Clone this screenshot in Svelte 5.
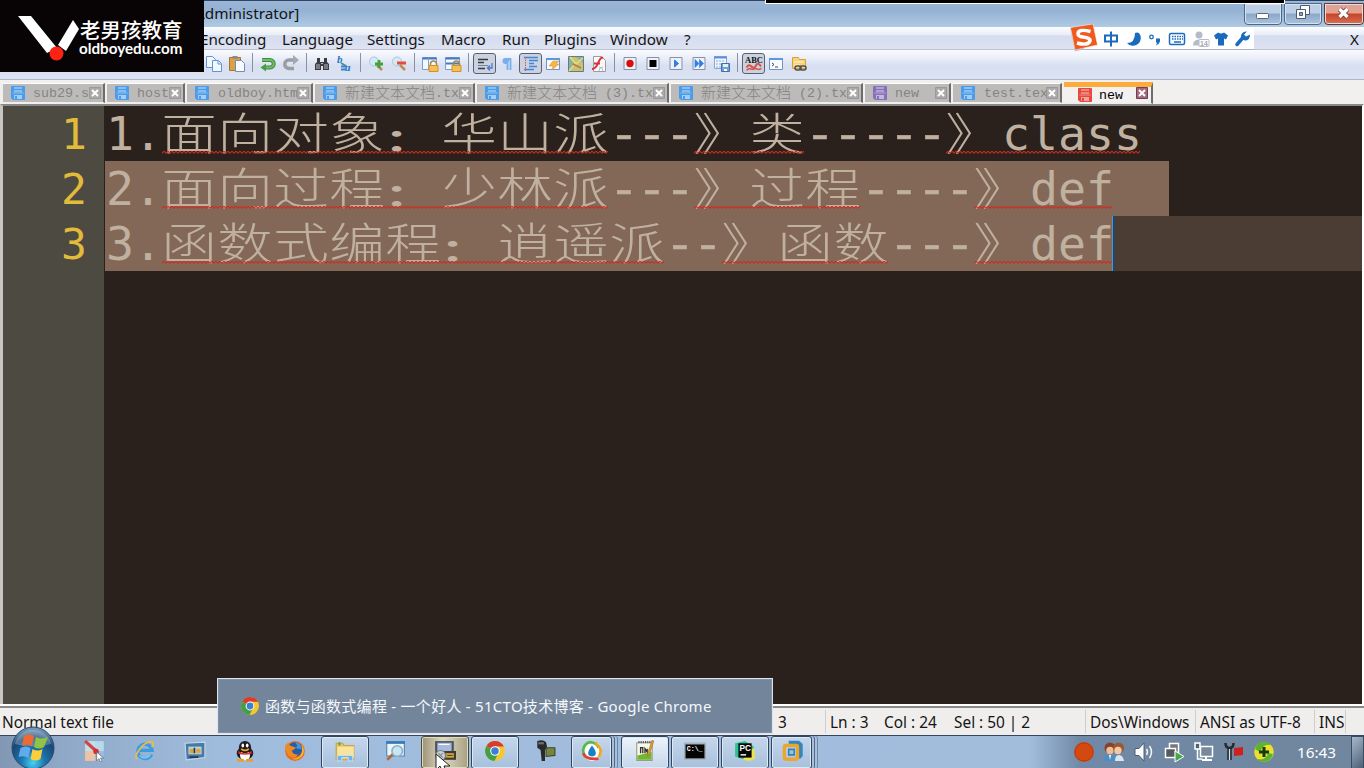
<script>
  const menus = [
    ['Encoding', 200, 68], ['Language', 282, 71], ['Settings', 367, 60], ['Macro', 441, 47],
    ['Run', 502, 28], ['Plugins', 544, 52], ['Window', 610, 60], ['?', 684, 8]
  ].map(([t, x, w], i, a) => ({ t, w, gap: i ? x - a[i - 1][1] - a[i - 1][2] : 0 }));

  const tools = ['copy', 'paste', '|', 'undo', 'redo', '|', 'find', 'replace', '|', 'zin', 'zout', '|', 'syncv', 'synch', '|',
    '*wrap', 'pilcrow', '*indent', 'udl', 'map', 'func', '|', 'rec', 'stop', 'play', 'ff', 'savemacro', '|', '*abc', 'console', 'folder'];

  const tabs = [
    { w: 102, pad: 30, cjk: '', t: 'sub29.s', c: '#4a9bea' },
    { w: 78, pad: 30, cjk: '', t: 'host', c: '#4a9bea' },
    { w: 126, pad: 31, cjk: '', t: 'oldboy.htm', c: '#4a9bea' },
    { w: 160, pad: 30, cjk: '新建文本文档', t: '.tx', c: '#4a9bea' },
    { w: 192, pad: 30, cjk: '新建文本文档', t: ' (3).tx', c: '#4a9bea' },
    { w: 192, pad: 30, cjk: '新建文本文档', t: ' (2).tx', c: '#4a9bea' },
    { w: 86, pad: 30, cjk: '', t: 'new', c: '#8670b8' },
    { w: 109, pad: 31, cjk: '', t: 'test.tex', c: '#4a9bea' },
    { w: 89, pad: 35, cjk: '', t: 'new', c: '#e8493e', on: true }
  ];

  // Each segment: [text, misspelled]; CJK glyphs take two columns.
  const lines = [
    [['1.', 0], ['面向对象：华山派', 1], ['---', 0], ['》类', 1], ['-----', 0], ['》class', 1]],
    [['2.', 0], ['面向过程：少林派', 1], ['---', 0], ['》过程', 1], ['----', 0], ['》def', 1]],
    [['3.', 0], ['函数式编程：逍遥派', 1], ['--', 0], ['》函数', 1], ['---', 0], ['》def', 1]]
  ];
  const kind = (ch) => (ch === '：' ? 'w colon' : ch.charCodeAt(0) > 255 ? 'w' : ch === '-' ? 'n dash' : 'n');

  const tasks = [
    ['paint', 50, ''], ['ie', 50, ''], ['vm', 50, ''], ['qq', 50, ''], ['firefox', 50, ''], ['explorer', 50, 'open'],
    ['search', 50, ''], ['putty', 50, 'hover'], ['chrome', 50, 'open'], ['camera', 50, ''], ['swirl', 50, 'open short'],
    ['npp', 50, 'open lit'], ['cmd', 50, 'open'], ['pycharm', 50, 'open'], ['vmware', 50, 'open short']
  ];
  const tray = ['ball', 'people', 'speaker', 'eject', 'net', 'flag', 'plus'];
</script>

{#snippet disk(c)}
  <svg class="disk" width="14" height="14" viewBox="0 0 14 14"><path d="M.5 .5h13v13H2L.5 12z" fill={c} stroke={c} /><path d="M3 1h8v5H3z" fill="#fff" opacity=".35" /><path d="M3 3.500h8" stroke={c} /><path d="M1.500 7h11" stroke="#fff" opacity=".4" /><path d="M3 9h8v4H3z" fill="#fff" opacity=".5" /><path d="M4 10h2v3H4z" fill={c} /></svg>
{/snippet}

{#snippet chrome()}
  <circle cx="10" cy="10" r="9" fill="#f6c62f" /><path d="M10 10L2.200 5.500A9 9 0 0 1 18 5.800H10z" fill="#d93c2d" /><path d="M10 10L2.200 5.500A9 9 0 0 0 9.500 19L13 12z" fill="#43a047" /><circle cx="10" cy="10" r="4.400" fill="#fff" /><circle cx="10" cy="10" r="3.400" fill="#3e7fd6" />
{/snippet}

{#snippet tool(n)}
  <svg width="18" height="18" viewBox="0 0 18 18" fill="none">
    {#if n === 'copy'}
      <g fill="#f3f8ff" stroke="#5d94da"><path d="M1.500 1.500h6l3 3v8h-9z" /><path d="M7.500 5.500h6l3 3v8h-9z" /><path d="M13 6v3h3" /></g>
    {:else if n === 'paste'}
      <path d="M1.500 2.500h11v13h-11z" fill="#dda043" stroke="#a8742c" /><path d="M4.500 1h5v3h-5z" fill="#8c8c90" /><path d="M7.500 5.500h6l3 3v8h-9z" fill="#f7faff" stroke="#6f8fb8" />
    {:else if n === 'undo'}
      <path d="M3 5h8a3.700 3.700 0 0 1 0 7.500H6" stroke="#3f8b3f" stroke-width="4" /><path d="M3 5h8a3.700 3.700 0 0 1 0 7.500H6" stroke="#70bc68" stroke-width="2" /><path d="M7 8.500v8L1.500 12.500z" fill="#4a9b47" />
    {:else if n === 'redo'}
      <path d="M12 5H7a3.700 3.700 0 0 0 0 8.500h5" stroke="#9a9da4" stroke-width="3.500" /><path d="M11 0v10l6-5z" fill="#a5a8ae" />
    {:else if n === 'find'}
      <path d="M4 3h3v4h4V3h3v4l2 2v6h-6v-4H8v4H2V9l2-2z" fill="#3a3c42" /><path d="M4 9v5M6 9v5M12 9v5M14 9v5M8 8.500h2" stroke="#b8bcc6" />
    {:else if n === 'replace'}
      <text x="1" y="8" class="ab">b</text><text x="9" y="16" class="ab">a</text><path d="M5 8l5 3" stroke="#47967c" stroke-width="2" /><path d="M5 11.500h6M5 14.500h5" stroke="#3e7fd0" stroke-width="2" />
    {:else if n === 'zin' || n === 'zout'}
      <circle cx="7" cy="6.500" r="4.500" fill="#d2e9f6" stroke="#aac8dc" /><path d="M10 10l5 5" stroke="#c08a54" stroke-width="2.500" />
      {#if n === 'zin'}<path d="M12 5v8M8 9h8" stroke="#43a03b" stroke-width="2.800" />{:else}<path d="M7 8h9" stroke="#e64a3f" stroke-width="3" />{/if}
    {:else if n === 'syncv' || n === 'synch'}
      <path d="M1.500 2.500h14v12h-14z" fill="#f3f9ff" stroke="#79a0d4" /><path d="M1.500 3.500h14" stroke="#4779bb" stroke-width="2" />
      {#if n === 'syncv'}<path d="M7.500 3v11" stroke="#79a0d4" />{:else}<path d="M2 8.500h13" stroke="#4779bb" stroke-width="2" />{/if}
      <path d="M9.500 11V9a3 3 0 0 1 6 0v2" stroke="#a38651" stroke-width="1.500" /><path d="M8 10.500h9v6H8z" fill="#f8be4e" stroke="#d3902c" />
    {:else if n === 'wrap'}
      <path d="M2 4.500h10M2 7.500h6M2 13.500h7" stroke="#343a46" stroke-width="1.500" /><path d="M2 10.500h10" stroke="#76809a" /><path d="M16 8v5h-4M14 10.500L11.500 13l2.500 2.500" stroke="#4779d0" stroke-width="1.300" />
    {:else if n === 'pilcrow'}
      <path d="M13 3H7.500a3 3 0 0 0 0 6H9z" fill="#78aeea" /><path d="M9.500 3v12M12.500 3v12" stroke="#78aeea" stroke-width="1.800" />
    {:else if n === 'indent'}
      <path d="M2 2.500h14M7 5.500h9M7 8.500h5M7 11.500h8M2 14.500h10" stroke="#3f86dc" stroke-width="1.500" /><path d="M3.500 2v14" stroke="#df5454" stroke-dasharray="1.500 1" />
    {:else if n === 'udl' || n === 'console'}
      <path d="M2.500 3.500h13v11h-13z" fill="#f7fbff" stroke="#7292c0" /><path d="M2 4h14" stroke="#5d97e0" stroke-width="2" />
      {#if n === 'udl'}<path d="M9 6h6l-3 3h3l-7 6 1-4H5z" fill="#f6b747" stroke="#d98d2d" stroke-width=".5" />{:else}<path d="M5 8l2 1.500L5 11M8 12h3" stroke="#3d4956" />{/if}
    {:else if n === 'map'}
      <path d="M1.500 1.500h15v15h-15z" fill="#c3c474" stroke="#66788a" /><path d="M2 2l6 8-6 6zM9 2h7v6z" fill="#86b3a3" /><path d="M3 2l6 7 7-6M8 9l-6 7" stroke="#f0da7a" stroke-width="1.500" /><path d="M6 9l8 4" stroke="#c07448" stroke-width="1.500" />
    {:else if n === 'func'}
      <path d="M3.500 1.500h8l4 4v11h-12z" fill="#fbf9f9" stroke="#9b9ba0" /><path d="M13 3c-5-2-4 11-11 11M4 8.500h6" stroke="#d6323a" stroke-width="2" /><path d="M9 12q4 0 4 4M13 12q-4 0-4 4" stroke="#b8bcc4" />
    {:else if n === 'savemacro'}
      <path d="M1.500 1.500h12v12h-12z" fill="#eef5ff" stroke="#8aa6d0" /><path d="M1 2.500h13" stroke="#5a92dc" stroke-width="2" /><path d="M3 6h9M3 9h6M3 12h5" stroke="#8aa6d0" stroke-dasharray="2 1" /><path d="M8.500 8.500h8v8h-8z" fill="#6ea0dc" stroke="#466fa9" /><path d="M10 9h5v3h-5z" fill="#ddf5e0" /><path d="M11 14h3v2h-3z" fill="#fff" />
    {:else if n === 'abc'}
      <text x="9" y="7.500" class="abc">ABC</text><path d="M1.500 12.500q2.500-4 5-1t4.500-1 5 1" stroke="#d6534b" stroke-width="2" /><path d="M1.500 15l3-1.500 3 1 3-1 3 1 3-1" stroke="#d6534b" stroke-width="1.500" />
    {:else if n === 'folder'}
      <path d="M2.500 4V2.500h6l1 2h6v9h-13z" fill="#f9d37c" stroke="#d9a041" /><path d="M4 7h9M4 10h6" stroke="#fff4cb" /><rect x="5" y="11" width="6" height="4" rx="2" stroke="#4d5054" stroke-width="1.500" /><rect x="10" y="11" width="6" height="4" rx="2" stroke="#4d5054" stroke-width="1.500" />
    {:else}
      <path d="M3 2.500h12v12H3z" fill="#eef1f8" stroke="#8590a8" />
      {#if n === 'rec'}<circle cx="9" cy="8.500" r="3.700" fill="#d80f0f" />
      {:else if n === 'stop'}<path d="M5.500 5h7v7h-7z" fill="#000" />
      {:else if n === 'play'}<path d="M7.500 5v7l4-3.500z" fill="#2f7fe2" stroke="#2f7fe2" />
      {:else}<path d="M5 4.500v8l4-4zM9.500 4.500v8l4-4z" fill="#2f7fe2" stroke="#2f7fe2" stroke-width=".7" />{/if}
    {/if}
  </svg>
{/snippet}

{#snippet taskicon(n)}
  <svg width="22" height="22" viewBox="0 0 20 20" fill="none">
    {#if n === 'paint'}
      <path d="M1 1h9v9H1z" fill="#bfe3e2" /><path d="M10 1h8v9h-8z" fill="#b7d9ea" /><path d="M1 10h9v9H1z" fill="#edc3a5" /><path d="M10 10h8v9h-8z" fill="#98bce9" /><path d="M1 1l10 9" stroke="#d04552" stroke-width="3" /><circle cx="11" cy="10.500" r="2.500" fill="#d33327" /><path d="M11.500 11v8l2-2 1.500 3 1.500-1-1.500-2.500h3z" fill="#fff" stroke="#555" stroke-width=".6" />
    {:else if n === 'ie'}
      <path d="M16 13a6.500 6.500 0 1 1 .5-3.500H5" stroke="#3b9be3" stroke-width="3" /><path d="M15 13a6 6 0 0 1-10 1" stroke="#8bd0f7" /><path d="M3 17C-2 17 8 1 16 1.500c3 .5 1 4 0 5" stroke="#efbd3d" stroke-width="1.500" />
    {:else if n === 'vm'}
      <path d="M1 3l18-1v14L2 18z" fill="#4479a9" stroke="#c5d9e9" /><path d="M4 6h12v7H4z" fill="#bcd4dd" /><path d="M5 8h4v4H5zM11 8h4v4h-4z" fill="#d9a73f" /><path d="M9.500 7v5M5 15.500h8" stroke="#223a4d" stroke-width="1.500" />
    {:else if n === 'qq'}
      <ellipse cx="10" cy="12" rx="7.500" ry="6" fill="#1d1d21" /><ellipse cx="10" cy="14" rx="4.500" ry="4.500" fill="#fff" /><ellipse cx="10" cy="6.500" rx="5.500" ry="5.500" fill="#1d1d21" /><ellipse cx="8" cy="5" rx="1.200" ry="1.800" fill="#fff" /><ellipse cx="12" cy="5" rx="1.200" ry="1.800" fill="#fff" /><path d="M6.500 8q3.500 3 7 0" stroke="#f5a51e" stroke-width="1.500" /><path d="M4 10q6 4 12 0v2.500q-6 2-12 0z" fill="#df332d" /><path d="M3 18.500h6M11 18.500h6" stroke="#ee9d23" stroke-width="2.500" />
    {:else if n === 'firefox'}
      <circle cx="10" cy="10" r="9" fill="#e66e1a" /><circle cx="10" cy="8.500" r="6.500" fill="#275da5" /><path d="M10 2q6 0 6 7c-2-2-3 0-5-2l1-2z" fill="#4696d6" /><path d="M1 5q2-2 3-3 0 3 4 4l3 1-4 3q2 4 6 3-3 5-9 1Q1 10 1 5z" fill="#ed8a24" /><path d="M16 4q4 6 0 11-4 4-9 2 12 0 9-13z" fill="#f7be3b" />
    {:else if n === 'explorer'}
      <path d="M2 3h6l1 2h9v13H2z" fill="#e9c463" stroke="#caa247" /><path d="M3 6h15v10H3z" fill="#f8e59d" /><path d="M3 19v-5h14v5h-4v-3H7v3z" fill="#6bb4e5" stroke="#d7edfb" stroke-width=".7" /><path d="M5 2v3" stroke="#65a94a" stroke-width="2" />
    {:else if n === 'search'}
      <path d="M2.500 1.500h16v13h-16z" fill="#eaf7fd" stroke="#4c84b8" /><path d="M2 2.500h17" stroke="#3679b6" stroke-width="2" /><path d="M8 13l-5 5" stroke="#ad6a3b" stroke-width="2.500" /><circle cx="12" cy="10" r="4.800" fill="#c7e6f3" stroke="#8fb0c2" stroke-width="1.500" />
    {:else if n === 'putty'}
      <path d="M1 1h17v11H1z" fill="#4d545f" /><path d="M3 2.500h13v8H3z" fill="#a8b9df" /><path d="M4 4h10" stroke="#fff" /><path d="M8 10h12v8H8z" fill="#3d3b35" /><path d="M11 12h7v4h-7z" fill="#e0ad32" /><path d="M12 14h5" stroke="#3d3b35" /><circle cx="6" cy="14" r="4.500" fill="#ccd0d4" stroke="#747c83" /><path d="M4 12l4 4M8 12l-4 4" stroke="#838a91" />
    {:else if n === 'chrome'}{@render chrome()}
    {:else if n === 'camera'}
      <path d="M3 1q5-2 8 1l1 5-2 2v10H7L6 9 3 7z" fill="#29292a" /><path d="M4 3h5" stroke="#707173" stroke-width="2" /><path d="M11 7h8v7l-8 1z" fill="#77843b" stroke="#3f4631" />
    {:else if n === 'swirl'}
      <circle cx="10" cy="10" r="9" fill="#fff" /><path d="M4 15A8 8 0 0 1 8 2q6 0 8 5" stroke="#58b947" stroke-width="2.500" /><path d="M13 2.500q8 6 3 13" stroke="#eda927" stroke-width="2.500" /><path d="M2 12q2 6 14 5" stroke="#de4436" stroke-width="2.500" /><path d="M10 5q7 9 0 10-7-1 0-10z" fill="#1682c4" />
    {:else if n === 'npp'}
      <path d="M2.500 2.500h14v16h-14z" fill="#f6f8e8" stroke="#999" /><path d="M3 14l13-3v7H3z" fill="#70b82c" /><path d="M6 12V7h2v5M10 12V8l2 3V8" stroke="#303030" stroke-width="1.200" /><path d="M18 1l-4 12-1.500 2v-3l4-12z" fill="#e3a42c" stroke="#a36d24" stroke-width=".6" /><path d="M4 2h11" stroke="#555" stroke-dasharray="1 1" stroke-width="2" />
    {:else if n === 'cmd'}
      <path d="M1 3h18v14H1z" fill="#050505" stroke="#888" /><path d="M1 3.500h18" stroke="#c7ccd1" /><text x="2.500" y="10" class="cmd">C:\_</text>
    {:else if n === 'pycharm'}
      <path d="M1 3l9-2 8 5v10l-8 2-9-3z" fill="#2bc58c" /><path d="M11 14l7-7 1 6v4l-5 2-6-1z" fill="#ece34b" /><path d="M4 3h12v13H4z" fill="#050505" /><text x="5" y="10" class="pc">PC</text><path d="M6 13.500h5" stroke="#fff" stroke-width="1.300" />
    {:else if n === 'vmware'}
      <path d="M7 2.500h9l2 2V14l-2 2" stroke="#3787b4" stroke-width="3.500" stroke-linejoin="round" /><rect x="3" y="5" width="12" height="12.500" rx="1.500" stroke="#eda52c" stroke-width="3" /><path d="M7 8.500h5v5H7z" fill="#a3bfdd" stroke="#2f85b8" stroke-width="1.500" />
    {/if}
  </svg>
{/snippet}

{#snippet trayicon(n)}
  <svg width="22" height="22" viewBox="0 0 22 22" fill="none">
    {#if n === 'ball'}<circle cx="11" cy="11" r="10" fill="#d24a12" /><circle cx="11" cy="11" r="9" stroke="#bd3b0b" />
    {:else if n === 'people'}<circle cx="7" cy="7" r="5.500" fill="#87402e" /><circle cx="7" cy="9.500" r="3.700" fill="#edbf99" /><circle cx="15.500" cy="7" r="5.500" fill="#9a5831" /><circle cx="15" cy="9.500" r="3.700" fill="#f0c9a5" /><path d="M1 20q0-6 6-6t6 6z" fill="#4a8fc8" /><path d="M12 20q0-6 4-6t5 6z" fill="#d7e7ed" /><path d="M6 14l1 5 1-5" fill="#fff" />
    {:else if n === 'speaker'}<path d="M2 7.500h4L11 2v18l-5-5.500H2z" fill="#fff" stroke="#4d5e71" /><path d="M13.500 8q2 3 0 6M16.500 5q4 6 0 12" stroke="#eff5fa" stroke-width="1.500" />
    {:else if n === 'eject'}<path d="M6.500 2.500h9v9h-9z" fill="#777" stroke="#fff" stroke-width="1.500" /><path d="M2.500 7.500h10v9h-10z" fill="#555a5d" stroke="#fff" stroke-width="1.500" /><path d="M12 10v11l9-5.500z" fill="#49a74b" stroke="#fff" />
    {:else if n === 'net'}<path d="M7.500 5.500h12v10h-12z" fill="#77899a" stroke="#fff" stroke-width="1.500" /><path d="M9 19h10M13 16v3" stroke="#fff" stroke-width="2" /><path d="M2 2h5v6H2zM4.500 8v10h5" stroke="#fff" stroke-width="1.500" /><path d="M3 3h3v4H3z" fill="#4e6170" />
    {:else if n === 'flag'}<path d="M5.500 6v13M7.500 6v13" stroke="#35414c" stroke-width="3" /><path d="M2.500 2q0 5 4 5t4-5" stroke="#24292e" stroke-width="2.500" /><path d="M6.500 8v11" stroke="#dce1e4" /><path d="M11 7l9-1v8l-9 1z" fill="#cf1f1f" />
    {:else}<circle cx="11" cy="11" r="9.800" fill="#eadf2a" /><path d="M2 8a9.500 9.500 0 0 1 16-4Q10 2 7 11zM20 13a9.500 9.500 0 0 1-16 5q9 2 11-6z" fill="#58b52c" /><path d="M11 6v10M6 11h10" stroke="#153b16" stroke-width="3" />
    {/if}
  </svg>
{/snippet}

<div class="screen">
  <header class="title">
    <span class="caption">Administrator]</span>
    <div class="wbtns">
      <i class="wb"><svg width="38" height="21"><rect x="12.500" y="9.500" width="12" height="5" rx="1" fill="#fff" stroke="#5b6573" /></svg></i>
      <i class="wb"><svg width="38" height="21" fill="#fff" stroke="#4f5c6d"><path d="M16.500 1.500h9v9h-9z" /><path d="M12.500 5.500h9v9h-9z" /><path d="M15.500 8.500h3v3h-3z" fill="#8ba9cc" /></svg></i>
      <i class="wb close"><svg width="39" height="21"><path d="M15.500 5l8 8M23.500 5l-8 8" stroke="#723a35" stroke-width="5" /><path d="M15.500 5l8 8M23.500 5l-8 8" stroke="#fff" stroke-width="3.400" /></svg></i>
    </div>
    <div class="strip"></div>
  </header>
  <nav class="menu">
    {#each menus as m}<span style="width:{m.w}px;margin-left:{m.gap}px">{m.t}</span>{/each}
    <b class="x">X</b>
  </nav>
  <div class="toolbar">
    {#each tools as t}
      {#if t === '|'}<i class="sep"></i>{:else}<span class="tb" class:pressed={t[0] === '*'}>{@render tool(t.replace('*', ''))}</span>{/if}
    {/each}
  </div>
  <div class="tabs">
    {#each tabs as t}
      <div class="tab" class:on={t.on} style="width:{t.w}px">
        <span class="lead" style="width:{t.pad}px">{@render disk(t.c)}</span><span class="cj">{t.cjk}</span><span class="tt">{t.t}</span>
        <svg class="tx" width="12" height="12"><path d="M.5 .5h11v11H.5z" class="bx" /><path d="M3 3l6 6M9 3L3 9" stroke="#fff" stroke-width="2" /></svg>
      </div>
    {/each}
  </div>
  <main class="editor">
    <svg width="0" height="0" class="defs"><defs><pattern id="zig" width="4" height="3" patternUnits="userSpaceOnUse"><path d="M-1 3.200L2 .2 5 3.200" fill="none" stroke="#d12a1e" stroke-width="1.100" /></pattern></defs></svg>
    <div class="gutter">{#each lines as _, i}<span>{i + 1}</span>{/each}</div>
    <div class="code">
      {#each lines as l, i}
        <div class="line l{i + 1}"><div class="run">{#each l as [s, bad]}<span class="seg">{#each s as ch}<span class={kind(ch)}>{ch}</span>{/each}{#if bad}<svg class="zig" height="3"><rect width="100%" height="3" fill="url(#zig)" /></svg>{/if}</span>{/each}</div></div>
      {/each}
    </div>
  </main>
  <footer class="status">
    <span style="width:776px">Normal text file</span><span style="width:49px">3</span>
    <span class="cell" style="width:260px"><em style="width:54px">Ln : 3</em><em style="width:70px">Col : 24</em><em>Sel : 50 | 2</em></span>
    <span class="cell" style="width:110px">Dos\Windows</span><span class="cell" style="width:119px">ANSI as UTF-8</span><span class="cell ins">INS</span>
  </footer>
  <div class="taskbar">
    <svg class="orb" width="44" height="44" viewBox="0 0 44 44">
      <defs><radialGradient id="og" cx=".5" cy=".85" r=".8"><stop offset="0" stop-color="#46d3f4" /><stop offset=".35" stop-color="#1c76ae" /><stop offset=".75" stop-color="#1a4674" /><stop offset="1" stop-color="#6f94b6" /></radialGradient></defs>
      <circle cx="22" cy="22" r="21" fill="url(#og)" stroke="#27496e" /><path d="M4 18A18.500 18.500 0 0 1 40 18Q22 23 4 18z" fill="#fff" opacity=".25" />
      <path d="M13 10q5-3 10 0l-2 10q-5-3-10 0z" fill="#ef6a31" /><path d="M25 11q5 3 12 0l-4 10q-5 3-10 0z" fill="#8ec543" /><path d="M9.500 22q5-3 10 0l-2 10q-5-3-10-1z" fill="#5fabec" /><path d="M21.500 23q5 3 10 0l-2 10q-5 3-10 0z" fill="#fbcf3b" />
    </svg>
    <div class="tasks">
      {#each tasks as [n, w, c]}<div class="slot" style="width:{w}px"><div class="task {c}">{@render taskicon(n)}</div></div>{/each}
    </div>
    <div class="tray">{#each tray as n}{@render trayicon(n)}{/each}<time>16:43</time><i class="peek"></i></div>
  </div>

  <div class="brand">
    <svg width="84" height="72"><path d="M18 16h13l26 32-10 5z" fill="#fff" /><path d="M73 20l6 9-13 22-8-6z" fill="#fff" /><circle cx="56.500" cy="53.500" r="7" fill="#fb2414" /></svg>
    <div class="words"><b>老男孩教育</b><strong>oldboyedu.com</strong></div>
  </div>
  <div class="ime">
    <svg width="184" height="28" viewBox="0 0 184 28" fill="none">
      <path d="M.5 3.500L23 0l4.500 21L5 26z" fill="#f15a1d" stroke="#fff" stroke-width=".5" stroke-linejoin="round" /><path d="M20.500 7.500q-12-3-12.500 2 0 3 5 3.500 8 1 7 4-2 5-13 2" stroke="#fff" stroke-width="3.500" />
      <g transform="translate(-1 .5)">
        <g stroke="#1a6bbe" stroke-width="2"><path d="M36 11h12v6H36zM42 7v15" /></g>
        <path d="M69 9a7 7 0 0 1-12 10q8 0 8-10 2-1 4 0z" transform="translate(1 -.5)" fill="#1a6bbe" /><circle cx="82.500" cy="12.500" r="1.800" stroke="#1a6bbe" stroke-width="1.300" /><path d="M87 14h4v3q-1 3-4 4 1-2 1-3h-1z" fill="#1a6bbe" />
        <rect x="100.500" y="9" width="15" height="11" rx="1.500" stroke="#1a6bbe" stroke-width="1.500" /><path d="M103 12h11M103 14.500h11" stroke="#1a6bbe" stroke-width="1.500" stroke-dasharray="1.500 1" /><path d="M105 17.500h7" stroke="#1a6bbe" stroke-width="1.500" />
        <circle cx="130" cy="10.500" r="3.500" fill="#b4bcc8" /><path d="M124 21q0-6 6-6t7 4v2z" fill="#b4bcc8" /><rect x="130" y="15" width="10" height="7" rx="1" fill="#fff" stroke="#b4bcc8" /><text x="131" y="21" class="n14">14</text>
        <path d="M145 11l4-3q3 2 6 0l4 3-2 4-2-1v7h-6v-7l-2 1z" fill="#1a6bbe" /><path d="M168 20l6-7" stroke="#1a6bbe" stroke-width="3.500" stroke-linecap="round" /><path d="M178 7l-3 3 2 2 4-2q0 6-5 6-5-1-4-5 1-4 6-4z" fill="#1a6bbe" />
      </g>
    </svg>
  </div>
  <div class="preview"><svg width="20" height="20" viewBox="0 0 20 20">{@render chrome()}</svg><span>函数与函数式编程 - 一个好人 - 51CTO技术博客 - Google Chrome</span></div>
  <svg class="pointer" width="16" height="20"><path d="M1 1v16l4-4 3 7h4l-3-7h6z" fill="#fff" stroke="#222" /></svg>
</div>

<style>
  :global(body) { background: #f0efee; overflow: hidden; }
  .screen { position: relative; width: 1364px; height: 768px; overflow: hidden; display: flex; flex-direction: column; font-family: "Noto Sans", "Noto Sans CJK SC", sans-serif; color: #141414; }
  .title { position: relative; height: 27px; flex: none; box-sizing: border-box; border-top: 1px solid #2d4566; background: linear-gradient(#9cb6d5, #93b1d3 35%, #b0cae4); display: flex; }
  .caption { margin-left: 195px; font-size: 15.300px; line-height: 25px; }
  .strip { position: absolute; left: 765px; top: -1px; width: 520px; height: 4px; box-sizing: border-box; background: #000; border: 1px solid #fff; border-top: 0; }
  .wbtns { margin-left: auto; display: flex; gap: 2px; padding-top: 2px; }
  .wb { width: 36px; height: 20px; border: 1px solid #4f6788; border-radius: 0 0 4px 4px; box-shadow: inset 0 0 0 1px #d5e2f0; background: linear-gradient(#bccfe4 45%, #8ca8c8 50%, #aac3df); }
  .wb svg { display: block; margin-left: -1px; }
  .close { width: 38px; background: linear-gradient(#e3a292 45%, #c64427 50%, #d77055); border-color: #713329; }
  .menu { height: 23px; flex: none; box-sizing: border-box; padding-left: 200px; display: flex; background: linear-gradient(#fcfdfe, #e9edf7 35%, #d5dcee 40%, #dde3f2); font-size: 15.200px; line-height: 25px; border-bottom: 1px solid #bcc2cf; white-space: nowrap; }
  .x { font-weight: 400; margin: 0 5px 0 auto; }
  .toolbar { height: 30px; flex: none; box-sizing: border-box; padding-left: 203px; display: flex; background: linear-gradient(#fbfcff, #e8edf8 30%, #d7dff0 55%, #dce4f4); border-bottom: 1px solid #abb7cd; padding-top: 3px; }
  .tb { width: 23px; height: 21px; box-sizing: border-box; border: 1px solid transparent; display: flex; align-items: center; justify-content: center; padding-top: 1px; margin-left: -1px; margin-right: 1px; }
  .pressed { border-color: #596171; border-radius: 3px; background: #cbd1de; margin: 0; }
  .sep { width: 8px; height: 19px; background: linear-gradient(90deg, transparent 3px, #8992a3 3px, #8992a3 4px, transparent 4px); }
  .ab { font: italic bold 11px "Liberation Serif", serif; fill: #2873c7; }
  .abc { font: bold 8.500px "Liberation Serif", serif; fill: #111; text-anchor: middle; }
  .tabs { height: 24px; flex: none; box-sizing: border-box; padding: 2px 0 0 3px; display: flex; gap: 2px; background: #f1f0ef; }
  .tab { position: relative; box-sizing: border-box; height: 20px; margin-top: 1px; background: #bcbbb9; border-top: 1px solid #fff; border-right: 2px solid #6d6c6a; display: flex; align-items: center; color: #858482; white-space: pre; overflow: hidden; border-bottom: 1px solid #eee; }
  .on { background: #f2f1f0; border-top: 5px solid #fcab3c; color: #000; margin-top: 0; margin-left: 0; height: 22px; }
  .lead { flex: none; padding-left: 8px; box-sizing: border-box; display: flex; }
  .on .lead { padding-left: 14px; }
  .tt { font: 13.330px "Liberation Mono", monospace; }
  .cj { font: 300 15px "Noto Sans CJK SC", sans-serif; line-height: 18px; position: relative; top: -1px; }
  .tx { position: absolute; right: 2px; top: 3px; }
  .on .tx { top: 0; right: 3px; }
  .bx { fill: #aaa; stroke: #999; }
  .on .bx { fill: #a4687e; stroke: #6d4054; }
  .editor { height: 600px; flex: none; display: flex; background: #2a211c; border: solid #8b8987; border-width: 2px 0 0 3px; border-left-color: #c9c6c2; box-sizing: border-box; border-right: 2px solid #fff; }
  .defs { position: absolute; }
  .gutter { width: 101px; background: #4c4a41; display: flex; flex-direction: column; }
  .gutter span { height: 55px; line-height: 57px; padding-right: 17px; text-align: right; font-family: "DejaVu Sans Mono", monospace; font-size: 43px; color: #e3bb3b; }
  .code { flex: 1; padding: 0 0 0 1px; }
  .line { height: 55px; position: relative; }
  .run { display: flex; height: 55px; padding-left: 1px; }
  .l2 .run { background: #836858; width: 1063px; }
  .l3 { background: #4b3d34; }
  .l3 .run { background: #836858; width: 1006px; border-right: 1px solid #4796dc; box-shadow: 2px 0 #254564; }
  .seg { display: flex; height: 55px; color: #bfb09f; position: relative; }
  .zig { position: absolute; left: 0; top: 45px; width: calc(100% - 2px); }
  .n { width: 28px; font: 46.500px/56px "DejaVu Sans Mono", monospace; }
  .dash { transform: scaleX(1.1); -webkit-text-stroke: .6px; }
  .w { width: 56px; height: 55px; font: 300 52px/55px "Noto Sans CJK SC", sans-serif; transform: translate(1px, -3px) scale(1.07, .86); transform-origin: 25px 28px; }
  .colon { font-weight: 700; transform: translate(-3px, 4px) scale(.95, .58); }
  .status { height: 31px; flex: none; box-sizing: border-box; border-top: 2px solid #fff; box-shadow: inset 0 2px #8c8a89; padding-top: 4px; display: flex; font-size: 15.400px; line-height: 25px; background: #f0eeec; white-space: nowrap; }
  .status > span { padding-left: 2px; box-sizing: border-box; height: 23px; margin-top: 0; }
  .status .cell { padding-left: 4px; border-left: 1px solid #cfcdcb; display: flex; }
  .status em { font-style: normal; }
  .status .ins { padding-left: 4px; width: 32px; border-right: 1px solid #cfcdcb; }
  .taskbar { position: relative; height: 33px; flex: none; box-sizing: border-box; border-top: 1px solid #33465e; display: flex; background: linear-gradient(90deg, #8197b3, #8fa8c8 60px, #a0bcdd 220px, #a2bcdc 1030px, #7089a6 1080px, #71869e); }
  .orb { position: absolute; left: 11px; top: -10px; }
  .tasks { display: flex; padding-left: 70px; }
  .slot { display: flex; height: 33px; }
  .task { width: 48px; height: 33px; margin-left: 1px; box-sizing: border-box; border: 1px solid transparent; border-radius: 3px; display: flex; align-items: center; justify-content: center; padding-bottom: 3px; }
  .open { border-color: #33465e; box-shadow: inset 0 0 0 1px #dceaf7; background: linear-gradient(#c4d6eb, #a8c0dc); }
  .lit { background: linear-gradient(#edf3fa, #c4d6ea); }
  .hover { border-color: #4b4b40; box-shadow: inset 0 0 0 1px #ddd9c4; background: linear-gradient(90deg, #9d9375, #dedac4 45%, #a8a080); }
  .short { width: 41px; position: relative; box-shadow: inset 0 0 0 1px #dceaf7, 2px 0 #a9c0db, 3px 0 #52698a, 5px 0 #a9c0db, 6px 0 #6f87a6; }
  .tray { margin-left: auto; display: flex; align-items: center; gap: 8px; }
  .tray time { color: #fff; font-size: 15.300px; margin-left: 14px; width: 46px; }
  .peek { width: 11px; height: 31px; border: 1px solid #3a4c60; background: linear-gradient(135deg, #a8b9cb, #4b6078); }
  .cmd { font: bold 6px "Liberation Mono", monospace; fill: #fff; }
  .pc { font: bold 7.500px "Liberation Sans", sans-serif; fill: #fff; }
  .n14 { font: bold 7px "Liberation Sans", sans-serif; fill: #9da6b2; }
  .brand { position: absolute; left: 0; top: 0; width: 204px; height: 72px; background: #080304; color: #fff; display: flex; }
  .brand svg { flex: none; margin-right: -4px; }
  .words { display: flex; flex-direction: column; padding-top: 18px; white-space: nowrap; }
  .words b { font: 500 20.500px/22px "Noto Sans CJK SC", sans-serif; }
  .words strong { font: bold 15.200px/17px Lato, sans-serif; margin-left: -1px; }
  .ime { position: absolute; left: 1070px; top: 24px; width: 184px; height: 28px; }
  .ime { background: linear-gradient(#fff, #fff) 14px 3px / 170px 22px no-repeat; filter: drop-shadow(0 1px 0 #a9b2c2); }
  .preview { position: absolute; left: 217px; top: 678px; width: 556px; height: 56px; box-sizing: border-box; background: #73859b; border: 1px solid #dbe4ee; box-shadow: inset 0 0 0 1px #7f92a8; color: #f5f8fc; display: flex; align-items: center; padding: 0 0 1px 22px; gap: 5px; white-space: nowrap; }
  .preview span { font-size: 15px; letter-spacing: .27px; }
  .pointer { position: absolute; left: 435px; top: 753px; }
</style>
